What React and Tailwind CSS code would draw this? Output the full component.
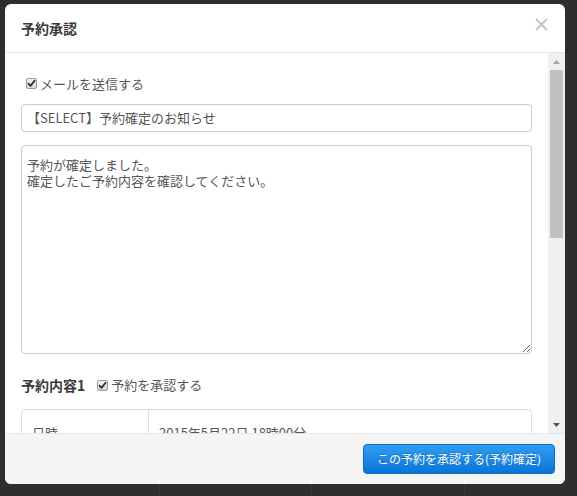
const Check = () => (
  <span className="flex h-[11px] w-[11px] shrink-0 items-center justify-center rounded-[2px] border border-[#9a9a9a] bg-linear-to-b from-[#f4f4f4] to-[#d6d6d6]">
    <svg width="9" height="9" viewBox="0 0 9 9">
      <path d="M1.5 4.6 L3.6 6.8 L7.6 1.8" fill="none" stroke="#2b2b2b" strokeWidth="1.8" strokeLinecap="round" strokeLinejoin="round" />
    </svg>
  </span>
);

const App = () => {
  return (
    <div
      className="h-[496px] w-[577px] overflow-hidden bg-[#2e2e2e] pl-[5px] pt-[4px] text-[#333]"
      style={{ fontFamily: '"Noto Sans CJK JP", "Noto Sans", sans-serif' }}
    >
      <div className="flex h-[480px] w-[560px] flex-col overflow-hidden rounded-[6px] bg-white">
        {/* header */}
        <div className="flex h-[49px] shrink-0 items-center justify-between border-b border-[#e5e5e5] pl-[16px] pr-[17px]">
          <h4 className="text-[14px] font-bold leading-[20px] text-[#3a3a3a]">予約承認</h4>
          <svg width="13" height="13" viewBox="0 0 13 13" className="mb-[8px]">
            <path d="M1 1 L12 12 M12 1 L1 12" stroke="#c4c4c4" strokeWidth="1.8" />
          </svg>
        </div>

        {/* body */}
        <div className="flex h-[380px] shrink-0">
          <div className="w-[543px] overflow-hidden pl-[16px] pr-[16px] pt-[22px]">
            <label className="flex h-[17px] items-center gap-[3px] pl-[5px] text-[13px] leading-[17px] text-[#555]">
              <Check />
              <span>メールを送信する</span>
            </label>

            <div className="mt-[12px] flex h-[28px] items-center rounded-[4px] border border-[#ccc] pl-[5px] text-[13px] text-[#555]">
              【SELECT】予約確定のお知らせ
            </div>

            <textarea
              readOnly
              defaultValue={'予約が確定しました。\n確定したご予約内容を確認してください。'}
              className="mt-[13px] block h-[209px] w-full resize-y rounded-[4px] border border-[#ccc] pl-[5px] pt-[11px] text-[13px] leading-[16px] text-[#555] outline-none"
            />

            <div className="mt-[21px] flex h-[20px] items-center">
              <span className="text-[14px] font-bold text-[#3a3a3a]">予約内容1</span>
              <label className="ml-[12px] flex items-center gap-[3px] text-[13px] text-[#555]">
                <Check />
                <span>予約を承認する</span>
              </label>
            </div>

            <div className="mt-[14px] flex h-[60px] rounded-[4px] border border-[#ddd] text-[13px] leading-[17px] text-[#555]">
              <div className="w-[127px] shrink-0 border-r border-[#ddd] pl-[10px] pt-[14px]">日時</div>
              <div className="pl-[10px] pt-[14px]">2015年5月22日 18時00分</div>
            </div>
          </div>

          {/* scrollbar */}
          <div className="flex w-[17px] flex-col bg-[#f0f0f0]">
            <div className="flex h-[17px] items-center justify-center">
              <svg width="7" height="4" viewBox="0 0 7 4"><path d="M0 4 L3.5 0 L7 4 Z" fill="#a3a3a3" /></svg>
            </div>
            <div className="mx-[2px] h-[168px] bg-[#c1c1c1]" />
            <div className="flex-1" />
            <div className="flex h-[17px] items-center justify-center">
              <svg width="7" height="4" viewBox="0 0 7 4"><path d="M0 0 L7 0 L3.5 4 Z" fill="#505050" /></svg>
            </div>
          </div>
        </div>

        {/* footer */}
        <div className="flex flex-1 justify-end border-t border-[#e5e5e5] bg-[#f5f5f5] pr-[10px] pt-[10px]">
          <button className="h-[30px] rounded-[4px] border border-[#0a6cc8] bg-linear-to-b from-[#2e9ef2] to-[#0874d6] px-[13px] text-[12px] text-white [text-shadow:0_-1px_0_rgba(0,0,0,0.2)]">
            この予約を承認する(予約確定)
          </button>
        </div>
      </div>

      {/* page behind the overlay */}
      <div className="flex h-[12px]">
        <div className="w-[155px] border-r border-[#383838]" />
        <div className="w-[152px] border-r border-[#383838]" />
        <div className="w-[153px] border-r border-[#383838]" />
      </div>
    </div>
  );
};

export default App;
